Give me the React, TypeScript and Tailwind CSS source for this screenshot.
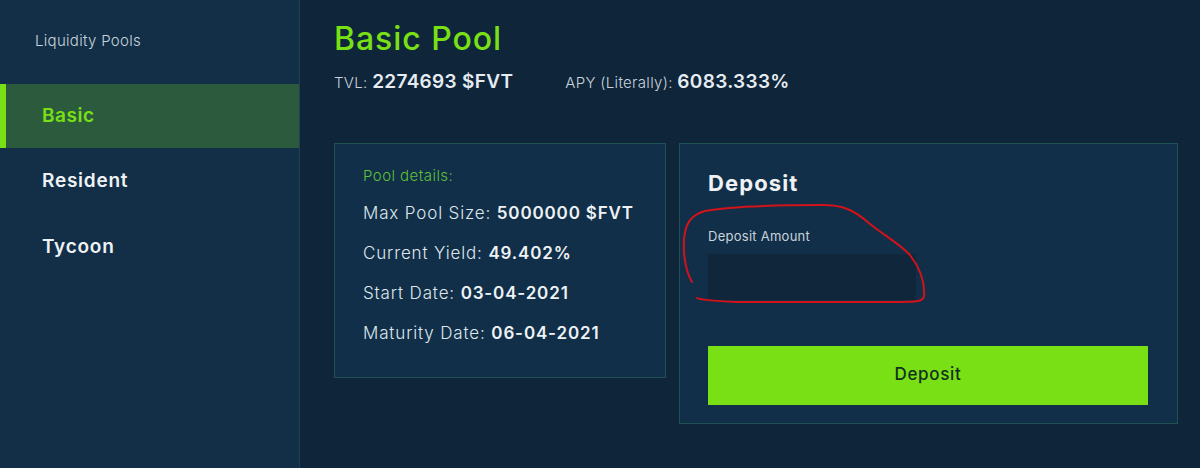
import React from "react";

export default function App() {
  const font = { fontFamily: 'Inter, "Noto Sans", sans-serif' };
  return (
    <div className="w-[1200px] h-[468px] flex bg-[#0f253a] overflow-hidden relative" style={font}>
      <aside className="w-[300px] h-full bg-[#122f47] border-r border-[#1c4150] flex flex-col">
        <div className="h-[84px] pl-[35px] pt-[30px] text-[15px] tracking-[0.02em] text-[#c9d3dc] font-light">Liquidity Pools</div>
        <div className="h-[64px] flex items-center bg-[#2b5a3d]">
          <div className="w-[6px] h-full bg-[#78e015]"></div>
          <span className="pl-[36px] text-[19px] tracking-[0.03em] font-semibold text-[#78e015]">Basic</span>
        </div>
        <div className="h-[66px] flex items-center pl-[42px] text-[19px] tracking-[0.04em] font-semibold text-[#eef2f5]">Resident</div>
        <div className="h-[66px] flex items-center pl-[42px] text-[19px] tracking-[0.04em] font-semibold text-[#eef2f5]">Tycoon</div>
      </aside>
      <main className="flex-1 pl-[34px] pt-[18px]">
        <h1 className="text-[32px] tracking-[0.03em] font-medium text-[#78e015] leading-[42px]">Basic Pool</h1>
        <div className="flex items-baseline mt-[8px] text-[#e6ecf1] tracking-[0.02em]">
          <span className="text-[15px] font-light text-[#c9d3dc]">TVL:&nbsp;</span>
          <span className="text-[19px] font-semibold">2274693 $FVT</span>
          <span className="ml-[52px] text-[15px] font-light text-[#c9d3dc]">APY (Literally):&nbsp;</span>
          <span className="text-[19px] font-semibold">6083.333%</span>
        </div>
        <div className="flex gap-[13px] mt-[46px] items-start">
          <div className="w-[332px] h-[235px] bg-[#112f48] border border-[#1f5052] pl-[28px] pt-[21px]">
            <div className="text-[15px] tracking-[0.03em] font-light text-[#5fc03a]">Pool details:</div>
            <div className="mt-[14px] flex flex-col gap-[16px] text-[17px] tracking-[0.05em] font-light text-[#dfe6ec]">
              <div className="leading-[24px]">Max Pool Size: <span className="font-semibold text-[#eef2f5]">5000000 $FVT</span></div>
              <div className="leading-[24px]">Current Yield: <span className="font-semibold text-[#eef2f5]">49.402%</span></div>
              <div className="leading-[24px]">Start Date: <span className="font-semibold text-[#eef2f5]">03-04-2021</span></div>
              <div className="leading-[24px]">Maturity Date: <span className="font-semibold text-[#eef2f5]">06-04-2021</span></div>
            </div>
          </div>
          <div className="w-[499px] h-[281px] bg-[#112f48] border border-[#1f5052] pl-[28px] pr-[29px] pt-[24px]">
            <h2 className="text-[22px] tracking-[0.05em] font-bold text-[#eef2f5] leading-[30px]">Deposit</h2>
            <div className="mt-[29px] text-[13px] tracking-[0.02em] leading-[18px] text-[#c9d3dc]">Deposit Amount</div>
            <div className="mt-[9px] w-[208px] h-[46px] bg-[#0f263b]"></div>
            <button className="mt-[46px] w-full h-[59px] bg-[#78e015] text-[17px] tracking-[0.04em] font-medium text-[#12301f]">Deposit</button>
          </div>
        </div>
      </main>
      <svg className="absolute left-0 top-0 pointer-events-none" width="1200" height="468">
        <path
          d="M692 282 C686 272 683 255 684 240 C685 225 690 215 705 211 C730 206 790 205 823 205 C840 205 852 208 870 224 C885 236 900 244 910 255 C920 268 925 282 924 296 C923 303 915 302 870 302 L737 302 C715 301 700 300 697 298"
          fill="none"
          stroke="#d3121a"
          strokeWidth="2"
          strokeLinecap="round"
        />
      </svg>
    </div>
  );
}
